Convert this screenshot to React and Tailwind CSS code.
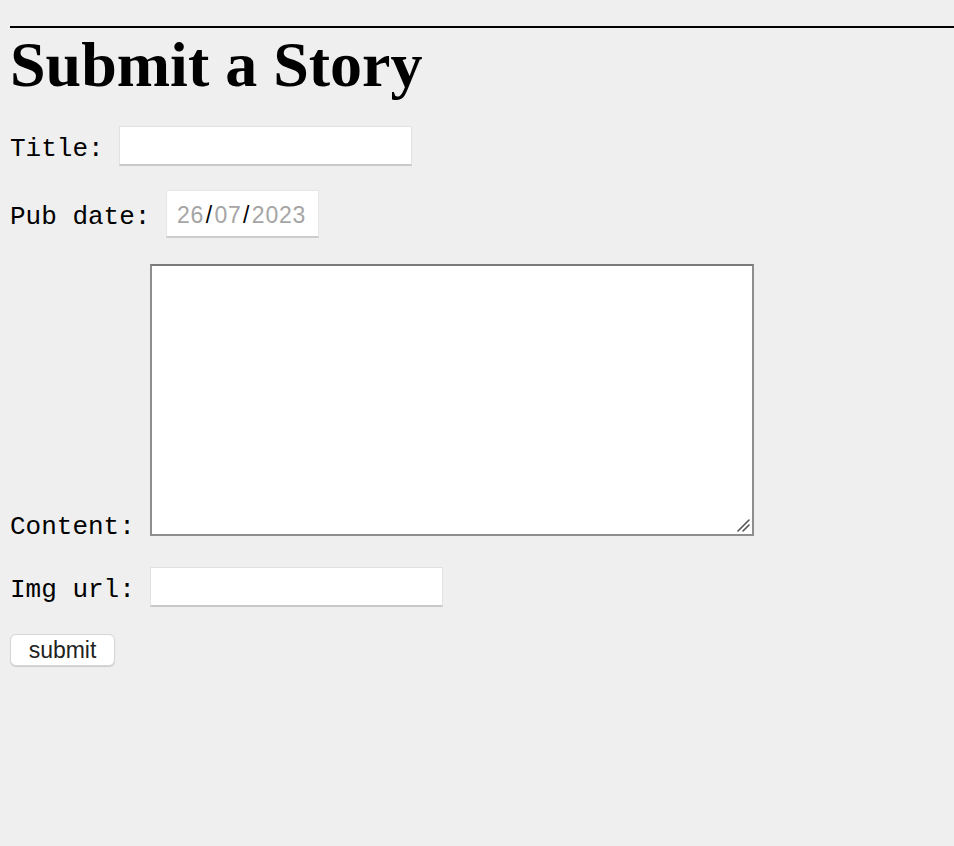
import React from "react";

const mono = "font-['Liberation_Mono','Courier_New',monospace] text-[26px] leading-[30px] text-black";

export default function App() {
  return (
    <div className="min-h-screen bg-[#efefef] pl-[10px] overflow-hidden">
      <hr className="mt-[26px] border-0 border-t-2 border-black" />
      <h1 className="font-['Liberation_Serif','Times_New_Roman',serif] font-bold text-[64px] leading-[74px] text-black">
        Submit a Story
      </h1>

      <form onSubmit={(e) => e.preventDefault()}>
        <div className="mt-[24px] flex items-center gap-[15.6px]">
          <label className={`${mono} pt-[5px]`}>Title:</label>
          <input className="w-[293px] h-[40px] bg-white border border-[#e2e2e2] border-b-2 border-b-[#c9c9c9] outline-none" />
        </div>

        <div className="mt-[24px] flex items-center gap-[15.6px]">
          <label className={`${mono} pt-[5px]`}>Pub date:</label>
          <div className="w-[153px] h-[48px] bg-white border border-[#e6e6e6] border-b-2 border-b-[#cdcdcd] flex items-center pl-[10px] pt-[3px] font-['Liberation_Sans',Arial,sans-serif] text-[23px] tracking-[0.8px]">
            <span className="text-[#a5a5a5]">26</span>
            <span className="text-black mx-[1.5px]">/</span>
            <span className="text-[#a5a5a5]">07</span>
            <span className="text-black mx-[1.5px]">/</span>
            <span className="text-[#a5a5a5]">2023</span>
          </div>
        </div>

        <div className="mt-[26px] flex items-end gap-[15.6px]">
          <label className={`${mono} mb-[-6px]`}>Content:</label>
          <div className="relative">
            <textarea className="block w-[604px] h-[272px] resize-none bg-white border-2 border-[#8e8e8e] border-t-[#7a7a7a] outline-none" />
            {/* resize grip */}
            <svg className="absolute right-[4px] bottom-[4px]" width="13" height="13" viewBox="0 0 13 13">
              <path d="M1 12 L12 1 M6 12 L12 6" stroke="#555" strokeWidth="1.6" strokeLinecap="round" />
            </svg>
          </div>
        </div>

        <div className="mt-[31px] flex items-center gap-[15.6px]">
          <label className={`${mono} pt-[5px]`}>Img url:</label>
          <input className="w-[293px] h-[40px] bg-white border border-[#e2e2e2] border-b-2 border-b-[#c9c9c9] outline-none" />
        </div>

        <button
          type="submit"
          className="mt-[27px] block w-[105px] h-[32px] bg-white rounded-[6px] border border-[#d6d6d6] shadow-[0_1px_1px_rgba(0,0,0,0.15)] font-['Liberation_Sans',Arial,sans-serif] text-[23px] leading-[30px] text-[#222]"
        >
          submit
        </button>
      </form>
    </div>
  );
}
